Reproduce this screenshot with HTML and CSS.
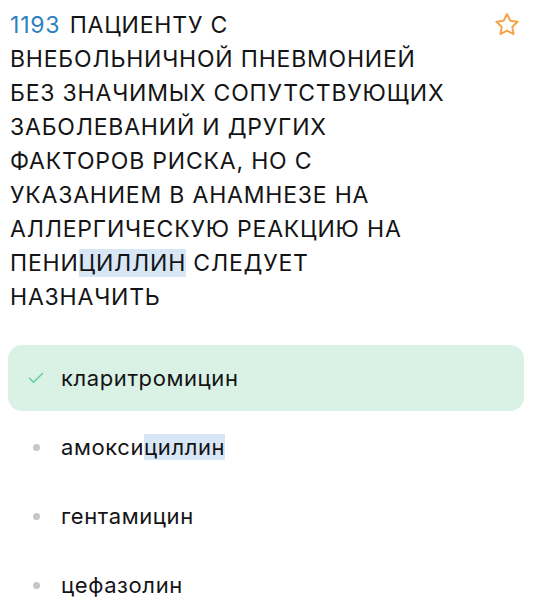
FILE: index.html
```html
<!DOCTYPE html>
<html lang="ru">
<head>
<meta charset="utf-8">
<title>Вопрос 1193</title>
<link rel="stylesheet" href="styles.css">
</head>
<body>
<article class="question">
  <header class="question-head">
    <p class="question-text"><span class="question-num">1193</span> ПАЦИЕНТУ С<br>ВНЕБОЛЬНИЧНОЙ ПНЕВМОНИЕЙ<br>БЕЗ ЗНАЧИМЫХ СОПУТСТВУЮЩИХ<br>ЗАБОЛЕВАНИЙ И ДРУГИХ<br>ФАКТОРОВ РИСКА, НО С<br>УКАЗАНИЕМ В АНАМНЕЗЕ НА<br>АЛЛЕРГИЧЕСКУЮ РЕАКЦИЮ НА<br>ПЕНИ<mark class="hl">ЦИЛЛИН</mark> СЛЕДУЕТ<br>НАЗНАЧИТЬ</p>
    <button class="fav" type="button" aria-label="В избранное">
      <svg width="28" height="28" viewBox="0 0 24 24" fill="none" stroke="#f4a44c" stroke-width="1.7" stroke-linejoin="round">
        <path d="M12 2.6l2.8 5.7 6.25.92-4.52 4.4 1.07 6.22L12 16.9l-5.6 2.94 1.07-6.22L2.95 9.22l6.25-.92z"/>
      </svg>
    </button>
  </header>
  <ul class="answers">
    <li class="answer correct">
      <span class="marker">
        <svg width="16" height="12" viewBox="0 0 16 12" fill="none" stroke="#5fcf9c" stroke-width="1.5" stroke-linecap="round" stroke-linejoin="round"><path d="M1.5 6.2l4 4 9-8.7"/></svg>
      </span>
      <span class="answer-text">кларитромицин</span>
    </li>
    <li class="answer">
      <span class="marker"><span class="dot"></span></span>
      <span class="answer-text">амокси<mark class="hl">циллин</mark></span>
    </li>
    <li class="answer">
      <span class="marker"><span class="dot"></span></span>
      <span class="answer-text">гентамицин</span>
    </li>
    <li class="answer">
      <span class="marker"><span class="dot"></span></span>
      <span class="answer-text">цефазолин</span>
    </li>
  </ul>
</article>
</body>
</html>
```
FILE: styles.css
```css
* { box-sizing: border-box; }

html, body {
  margin: 0;
  background: #ffffff;
}

body {
  padding: 8px 10px 0 8px;
  font-family: Inter, "Noto Sans", "Liberation Sans", sans-serif;
  color: #141416;
}

.question-head {
  display: flex;
  justify-content: space-between;
  align-items: flex-start;
}

.question-text {
  margin: 0;
  padding-left: 2px;
  font-size: 23px;
  line-height: 34px;
  letter-spacing: 0.8px;
  font-weight: 400;
}

.question-num {
  color: #2e7fc0;
  margin-right: 2px;
}

.hl {
  background: #d7e7f6;
  color: inherit;
}

.fav {
  flex: none;
  margin: 2px 2px 0 0;
  padding: 0;
  border: 0;
  background: none;
  width: 30px;
  height: 30px;
  display: flex;
  align-items: center;
  justify-content: center;
}

.answers {
  list-style: none;
  margin: 31px 0 0;
  padding: 0;
  display: flex;
  flex-direction: column;
  gap: 3px;
}

.answer {
  height: 66px;
  display: flex;
  align-items: center;
  border-radius: 14px;
  font-size: 22px;
  line-height: 35px;
  letter-spacing: 0.6px;
}

.answer.correct {
  background: #d9f2e5;
}

.marker {
  width: 53px;
  flex: none;
  display: flex;
  justify-content: center;
  padding-left: 3px;
}

.correct .marker {
  padding-left: 2px;
}

.dot {
  width: 7px;
  height: 7px;
  border-radius: 50%;
  background: #c6c6c8;
}
```
